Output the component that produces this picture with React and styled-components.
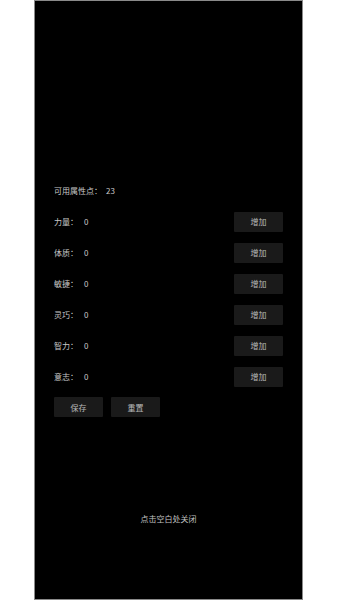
import React from 'react'
import styled, { createGlobalStyle } from 'styled-components'

const GlobalStyle = createGlobalStyle`
  html, body {
    margin: 0;
    padding: 0;
    background: #ffffff;
  }
  body {
    font-family: "Noto Sans CJK SC", "Noto Sans", sans-serif;
  }
`

const stats = ['力量', '体质', '敏捷', '灵巧', '智力', '意志']

const Screen = styled.div`
  width: 269px;
  height: 600px;
  margin: 0 auto;
  box-sizing: border-box;
  background: #000;
  border: 1px solid #8a8a8a;
  display: flex;
  flex-direction: column;
  padding: 174px 19px 0 19px;
`

const Row = styled.div`
  height: 31px;
  display: flex;
  align-items: center;
  font-size: 8px;
  color: #c8c8c8;
`

const Label = styled.span`
  margin-right: ${p => p.gap || 6}px;
`

const Value = styled.span`
  flex: 1;
`

const Btn = styled.button`
  width: 49px;
  height: 20px;
  border: none;
  border-radius: 1px;
  padding: 0;
  background: #1a1a1a;
  color: #b8b8b8;
  font-family: inherit;
  font-size: 8px;
  display: flex;
  align-items: center;
  justify-content: center;
`

const Actions = styled.div`
  display: flex;
  gap: 8px;
  margin-top: 5px;
`

const CloseHint = styled.div`
  margin-top: 96px;
  text-align: center;
  font-size: 8px;
  color: #c0c0c0;
`

export default function App() {
  return (
    <>
      <GlobalStyle />
      <Screen>
        <Row>
          <Label gap={4}>可用属性点：</Label>
          <Value>23</Value>
        </Row>
        {stats.map(s => (
          <Row key={s}>
            <Label>{s}：</Label>
            <Value>0</Value>
            <Btn>增加</Btn>
          </Row>
        ))}
        <Actions>
          <Btn>保存</Btn>
          <Btn>重置</Btn>
        </Actions>
        <CloseHint>点击空白处关闭</CloseHint>
      </Screen>
    </>
  )
}
